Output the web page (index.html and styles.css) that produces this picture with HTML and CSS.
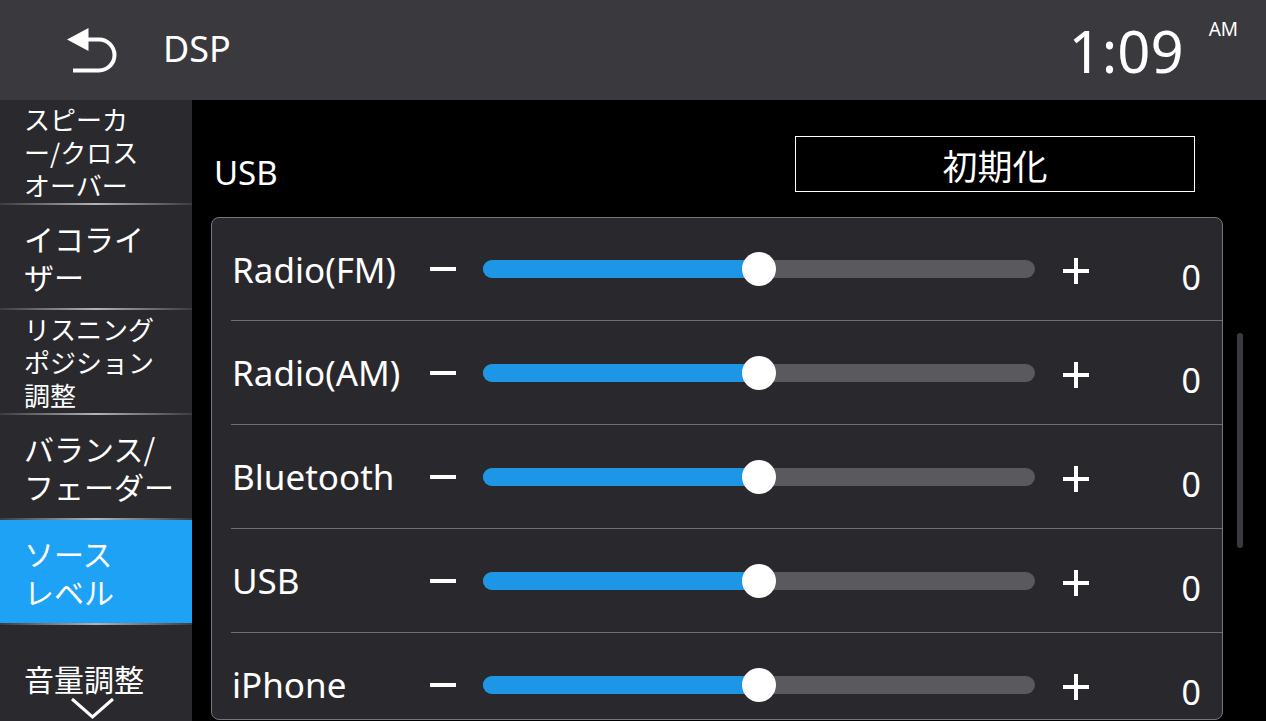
FILE: index.html
```html
<!DOCTYPE html>
<html lang="ja">
<head>
<meta charset="utf-8">
<title>DSP</title>
<link rel="stylesheet" href="styles.css">
</head>
<body>
<div class="screen">
  <header class="topbar">
    <svg class="back-icon" viewBox="66 26 54 48" aria-hidden="true">
      <path d="M67 39.5 L88.5 28 L88.5 51 Z" fill="#fff"/>
      <path d="M86 39.5 H99 A15.5 15.5 0 0 1 99 70.5 H73" fill="none" stroke="#fff" stroke-width="4"/>
    </svg>
    <div class="title">DSP</div>
    <div class="time">1:09</div>
    <div class="ampm">AM</div>
  </header>
  <div class="main">
    <nav class="sidebar">
      <div class="nav-item small first">スピーカ<br>ー/クロス<br>オーバー</div>
      <div class="nav-item">イコライ<br>ザー</div>
      <div class="nav-item small">リスニング<br>ポジション<br>調整</div>
      <div class="nav-item">バランス/<br>フェーダー</div>
      <div class="nav-item active">ソース<br>レベル</div>
      <div class="nav-item last">
        <div>音量調整</div>
        <svg class="chevron" viewBox="0 0 45 23" aria-hidden="true">
          <polyline points="2,2 22.5,20 43,2" fill="none" stroke="#fff" stroke-width="3"/>
        </svg>
      </div>
    </nav>
    <section class="content">
      <div class="title-row">
        <div class="source">USB</div>
        <button class="reset">初期化</button>
      </div>
      <div class="list-row">
        <div class="panel">
          <div class="row">
            <div class="label">Radio(FM)</div>
            <span class="minus"></span>
            <div class="track"><div class="fill" style="width:50%"></div><div class="thumb" style="left:50%"></div></div>
            <span class="plus"></span>
            <div class="value">0</div>
          </div>
          <div class="row">
            <div class="label">Radio(AM)</div>
            <span class="minus"></span>
            <div class="track"><div class="fill" style="width:50%"></div><div class="thumb" style="left:50%"></div></div>
            <span class="plus"></span>
            <div class="value">0</div>
          </div>
          <div class="row">
            <div class="label">Bluetooth</div>
            <span class="minus"></span>
            <div class="track"><div class="fill" style="width:50%"></div><div class="thumb" style="left:50%"></div></div>
            <span class="plus"></span>
            <div class="value">0</div>
          </div>
          <div class="row">
            <div class="label">USB</div>
            <span class="minus"></span>
            <div class="track"><div class="fill" style="width:50%"></div><div class="thumb" style="left:50%"></div></div>
            <span class="plus"></span>
            <div class="value">0</div>
          </div>
          <div class="row">
            <div class="label">iPhone</div>
            <span class="minus"></span>
            <div class="track"><div class="fill" style="width:50%"></div><div class="thumb" style="left:50%"></div></div>
            <span class="plus"></span>
            <div class="value">0</div>
          </div>
        </div>
        <div class="scrollbar"></div>
      </div>
    </section>
  </div>
</div>
</body>
</html>
```
FILE: styles.css
```css
html, body {
  margin: 0;
  padding: 0;
  background: #000;
}
body {
  font-family: "Noto Sans", "Noto Sans CJK JP", sans-serif;
  color: #fff;
  overflow: hidden;
}
.screen {
  width: 1266px;
  height: 721px;
  display: flex;
  flex-direction: column;
}

/* header */
.topbar {
  height: 100px;
  flex-shrink: 0;
  background: #3a393e;
  display: flex;
  align-items: center;
}
.back-icon {
  width: 54px;
  height: 48px;
  margin-left: 66px;
  flex-shrink: 0;
}
.title {
  font-size: 36px;
  margin-left: 43px;
  margin-bottom: 4px;
}
.time {
  margin-left: auto;
  font-size: 58px;
  line-height: normal;
}
.ampm {
  align-self: flex-start;
  margin-top: 16px;
  margin-left: 25px;
  margin-right: 28px;
  font-size: 19px;
  line-height: normal;
}

/* main area */
.main {
  display: flex;
  height: 621px;
}
.sidebar {
  width: 192px;
  flex-shrink: 0;
  background: #2a292e;
  overflow: hidden;
  font-family: "Noto Sans CJK JP", sans-serif;
}
.nav-item {
  height: 103px;
  padding-left: 24px;
  display: flex;
  flex-direction: column;
  justify-content: center;
  font-size: 30px;
  line-height: 38px;
  white-space: nowrap;
  border-bottom: 2px solid #8a898e;
  border-image: linear-gradient(90deg, #3b3a3f 0%, #b4b3b8 50%, #3b3a3f 100%) 1;
}
.nav-item.small {
  font-size: 26px;
  line-height: 33px;
}
.nav-item.active {
  background: #1ea2f6;
}
.nav-item.last {
  height: auto;
  justify-content: flex-start;
  padding-top: 34px;
  border-bottom: none;
  border-image: none;
}
.chevron {
  width: 45px;
  height: 23px;
  margin-left: 46px;
}

/* content */
.content {
  flex: 1;
  display: flex;
  flex-direction: column;
  padding: 36px 0 1px 19px;
  min-width: 0;
}
.title-row {
  width: 1012px;
  height: 56px;
  box-sizing: border-box;
  padding-right: 28px;
  display: flex;
  align-items: flex-end;
  justify-content: space-between;
  flex-shrink: 0;
}
.source {
  font-size: 33px;
  line-height: 33px;
  margin-left: 3px;
  margin-bottom: 3px;
}
.reset {
  width: 400px;
  height: 56px;
  padding: 0;
  background: transparent;
  border: 1px solid #fff;
  color: #fff;
  font-family: "Noto Sans CJK JP", sans-serif;
  font-size: 35px;
  line-height: 1;
}
.list-row {
  flex: 1;
  min-height: 0;
  display: flex;
  margin-top: 25px;
}
.panel {
  width: 1012px;
  box-sizing: border-box;
  border: 1px solid #76757a;
  border-radius: 8px;
  background: #29282d;
  overflow: hidden;
  flex-shrink: 0;
}
.scrollbar {
  width: 6px;
  height: 215px;
  margin-top: 116px;
  margin-left: 14px;
  background: #3a393e;
  border-radius: 3px;
}

/* rows */
.row {
  height: 103px;
  margin-left: 19px;
  border-bottom: 1px solid #6f6e73;
  display: flex;
  align-items: center;
}
.row:first-child {
  height: 102px;
}
.label {
  width: 199px;
  flex-shrink: 0;
  font-size: 35px;
  white-space: nowrap;
  padding-left: 1px;
  box-sizing: border-box;
}
.minus {
  width: 26px;
  height: 4px;
  background: #fff;
  flex-shrink: 0;
}
.track {
  position: relative;
  width: 552px;
  height: 18px;
  margin-left: 27px;
  background: #5a595e;
  border-radius: 9px;
  flex-shrink: 0;
}
.fill {
  height: 100%;
  background: #1e96e6;
  border-radius: 9px 0 0 9px;
}
.thumb {
  position: absolute;
  top: 50%;
  width: 34px;
  height: 34px;
  border-radius: 50%;
  background: #fff;
  transform: translate(-50%, -50%);
}
.plus {
  width: 26px;
  height: 26px;
  margin-left: 28px;
  margin-top: 4px;
  flex-shrink: 0;
  background:
    linear-gradient(#fff, #fff) center / 26px 4px no-repeat,
    linear-gradient(#fff, #fff) center / 4px 26px no-repeat;
}
.value {
  flex: 1;
  text-align: right;
  padding-right: 21px;
  margin-top: 15px;
  font-size: 34px;
}
```
